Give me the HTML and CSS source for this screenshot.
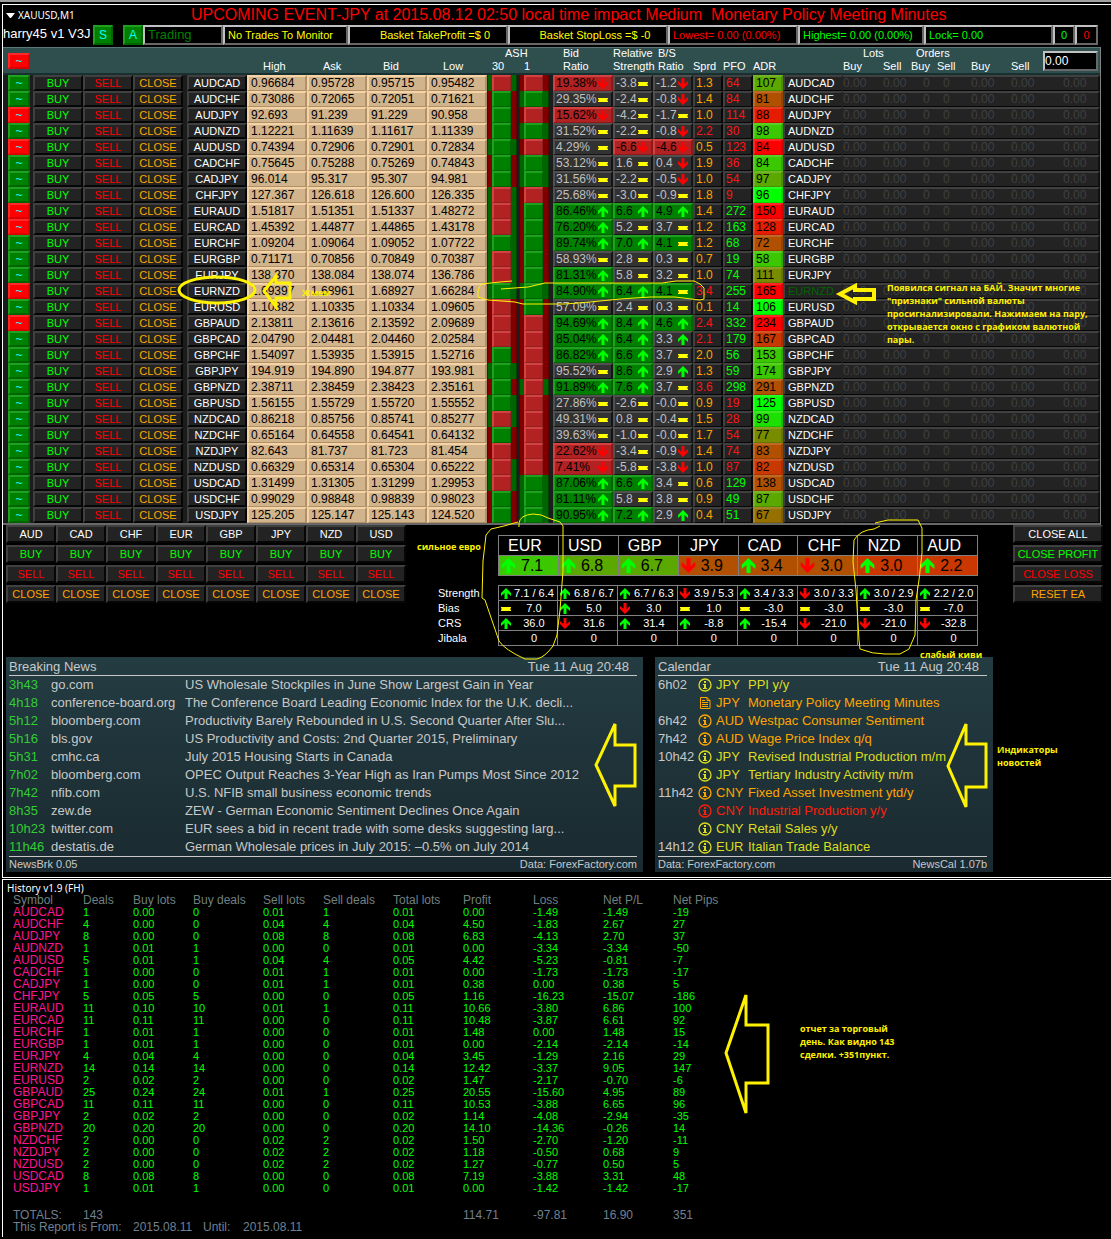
FILE: index.html
```html
<!DOCTYPE html>
<html lang="en">
<head>
<meta charset="utf-8">
<title>XAUUSD,M1</title>
<link rel="stylesheet" href="styles.css">
</head>
<body>
<svg width="0" height="0" class="defs" aria-hidden="true">
  <symbol id="up" viewBox="0 0 10 11"><path d="M5 0L10 5V8L6.500 5V11H3.500V5L0 8V5Z" fill="#00ff00"/></symbol>
  <symbol id="down" viewBox="0 0 10 11"><path d="M5 11L10 6V3L6.500 6V0H3.500V6L0 3V6Z" fill="#ff0000"/></symbol>
  <symbol id="flat" viewBox="0 0 10 11"><path d="M0 4H10V8H0Z" fill="#ffff00"/><path d="M0 5H1V7H0ZM9 5H10V7H9Z" fill="#a09000"/></symbol>
  <symbol id="info" viewBox="0 0 14 14"><circle cx="7" cy="7" r="6" fill="none" stroke="currentColor" stroke-width="1.300"/><path d="M6 3H8V5H6ZM5 6H8V10H9V11H5V10H6V7H5Z" fill="currentColor"/></symbol>
  <symbol id="doc" viewBox="0 0 14 14"><path d="M2.500 1.500H9L12 4.500V12.500H2.500ZM9 1.500V4.500H12M4 4.500H7M4 6.500H10M4 8.500H10M4 10.500H10" fill="none" stroke="currentColor"/></symbol>
</svg>
<div class="terminal">
  <section class="chart">
    <header class="title"><span class="caret"></span><h1>XAUUSD,M1</h1><p>UPCOMING EVENT-JPY at 2015.08.12 02:50 local time impact Medium&nbsp; Monetary Policy Meeting Minutes</p></header>
    <div class="status">
      <span class="ea">harry45 v1 V3J</span>
      <button class="mode">S</button><button class="mode">A</button>
      <span class="box dim">Trading</span>
      <span class="box yellow">No Trades To Monitor</span>
      <span class="box yellow mid basket">Basket TakeProfit =$ 0</span>
      <span class="box yellow mid basket">Basket StopLoss =$ -0</span>
      <span class="box red">Lowest= 0.00 (0.00%)</span>
      <span class="box lime">Highest= 0.00 (0.00%)</span>
      <span class="box lime">Lock= 0.00</span>
      <span class="box lime mid">0</span>
      <span class="box red mid">0</span>
    </div>
    <table class="pairs">
      <colgroup>
        <col class="w30"><col class="w50"><col class="w50"><col class="w50"><col class="w4"><col class="w60">
        <col class="w60"><col class="w60"><col class="w60"><col class="w60">
        <col class="w32"><col class="w34"><col class="w60"><col class="w40"><col class="w40">
        <col class="w30"><col class="w30"><col class="w30"><col class="w60"><col class="w40"><col class="w28">
        <col class="w26"><col class="w34"><col class="w40"><col class="w32"><col>
      </colgroup>
      <thead>
        <tr><th rowspan="2" class="act"><button class="sig r">~</button></th><th colspan="9"></th><th colspan="2" class="ash-h">ASH</th><th class="in2">Bid</th><th>Relative</th><th class="in1">B/S</th><th colspan="3"></th><th></th><th colspan="2" class="lots">Lots</th><th colspan="2" class="in1">Orders</th><th></th><th></th><th rowspan="2" class="act"><input class="lot" aria-label="Lot size" value="0.00"></th></tr>
        <tr><th></th><th></th><th></th><th></th><th></th><th class="in3">High</th><th class="in3">Ask</th><th class="in3">Bid</th><th class="in3">Low</th><th class="in1">30</th><th class="in1">1</th><th class="in2">Ratio</th><th>Strength</th><th class="in1">Ratio</th><th>Sprd</th><th>PFO</th><th>ADR</th><th></th><th>Buy</th><th>Sell</th><th>Buy</th><th>Sell</th><th>Buy</th><th>Sell</th></tr>
      </thead>
      <tbody id="pairs"></tbody>
    </table>
    <div class="middle">
      <div class="baskets" id="baskets"></div>
      <div class="strength">
        <table class="big"><tbody id="big"></tbody></table>
        <table class="small"><tbody id="small"></tbody></table>
      </div>
      <div class="global">
        <button class="btn white">CLOSE ALL</button><button class="btn lime">CLOSE PROFIT</button><button class="btn red">CLOSE LOSS</button><button class="btn orange">RESET EA</button>
      </div>
    </div>
    <div class="panels">
      <section class="panel news">
        <header><h2>Breaking News</h2><time>Tue 11 Aug 20:48</time></header>
        <ul id="news"></ul>
        <footer><span>NewsBrk 0.05</span><span>Data: ForexFactory.com</span></footer>
      </section>
      <section class="panel calendar">
        <header><h2>Calendar</h2><time>Tue 11 Aug 20:48</time></header>
        <ul id="calendar"></ul>
        <footer><span>Data: ForexFactory.com</span><span>NewsCal 1.07b</span></footer>
      </section>
    </div>
  </section>
  <section class="history">
    <h2>History v1.9 (FH)</h2>
    <table>
      <colgroup><col class="w70"><col class="w50"><col class="w60"><col class="w70"><col class="w60"><col class="w70"><col class="w70"><col class="w70"><col class="w70"><col class="w70"><col></colgroup>
      <thead><tr><th>Symbol</th><th>Deals</th><th>Buy lots</th><th>Buy deals</th><th>Sell lots</th><th>Sell deals</th><th>Total lots</th><th>Profit</th><th>Loss</th><th>Net P/L</th><th>Net Pips</th></tr></thead>
      <tbody id="history"></tbody>
      <tfoot><tr><td>TOTALS:</td><td colspan="6">143</td><td>114.71</td><td>-97.81</td><td>16.90</td><td>351</td></tr></tfoot>
    </table>
    <p class="report"><span>This Report is From:</span><span>2015.08.11</span><span>Until:</span><span>2015.08.11</span></p>
  </section>
  <svg class="marks" width="1111" height="1239" fill="none" stroke="#fff200" aria-hidden="true">
    <ellipse cx="217" cy="290" rx="38" ry="13" stroke-width="3"/>
    <path d="M264 291L276 276V283H290V298H276V307Z" stroke-width="3"/>
    <path d="M840 294L855 286V290H874V299H855V302Z" stroke-width="4"/>
    <path d="M596 765L615 724V745H635V786H615V806Z" stroke-width="3"/>
    <path d="M948 766L966 724V744H986V787H966V807Z" stroke-width="3"/>
    <path d="M726 1053L746 995V1025H768V1083H746V1113Z" stroke-width="3"/>
    <path d="M512 281L500 282L482 284Q477 288 478 297L488 300L515 302L523 304H565L590 302L620 299L650 297H675L700 300L704 299V288L700 284L694 281H676L662 283H545L528 287L501 289"/>
    <path d="M519 527V523Q520 515 533 514Q542 514 548 518L560 522L563 526V571L560 610L557 635L553 646Q545 657 537 659H525Q505 650 499 641L485 600L482 598L483 561L486 535L491 529L504 526L518 522"/>
    <path d="M880 526L874 529Q860 530 854 540L853 562L856 590L859 640L860 649Q872 654 885 654H900L909 649L915 635L916 600L919 580L922 553V528L918 520H888L875 523"/>
  </svg>
  <p class="note zhmem">Жмем</p>
  <p class="note signal">Появился сигнал на БАЙ. Значит многие<br>"признаки" сильной валюты<br>просигнализировали. Нажимаем на пару,<br>открывается окно с графиком валютной<br>пары.</p>
  <p class="note euro">сильное евро</p>
  <p class="note kiwi">слабый киви</p>
  <p class="note newsnote">Индикаторы<br>новостей</p>
  <p class="note day">отчет за торговый<br>день. Как видно 143<br>сделки. +351пункт.</p>
</div>
<script src="app.js"></script>
</body>
</html>
```
FILE: app.js
```js
// signal | pair | high ask bid low | ASH colours (30 outer/inner, 1 outer/inner) | bid ratio | strength | b/s | spread | PFO | ADR | ADR colour
// Readings carry a fill (n, g, r) and a trend (u, d, f).
const PAIRS = `
g AUDCAD 0.96684 0.95728 0.95715 0.95482 grrr 19.38%rd -3.8nf -1.2nd 1.3 -64 107 5aa800
g AUDCHF 0.73086 0.72065 0.72051 0.71621 rggg 29.35%nf -2.4nf -0.8nd 1.4 -84 81 b05000
r AUDJPY 92.693 91.239 91.229 90.958 rgrr 15.62%rd -4.2nf -1.7nf 1.0 -114 88 e61c00
g AUDNZD 1.12221 1.11639 1.11617 1.11339 rggg 31.52%nf -2.2nf -0.8nd 2.2 -30 98 3cc800
r AUDUSD 0.74394 0.72906 0.72901 0.72834 ggrr 4.29%nf -6.6rd -4.6rd 0.5 -123 84 ff0000
g CADCHF 0.75645 0.75288 0.75269 0.74843 rggg 53.12%nf 1.6nf 0.4nd 1.9 -36 84 3cc800
g CADJPY 96.014 95.317 95.307 94.981 rggg 31.56%nf -2.2nf -0.5nd 1.0 -54 97 5aa800
g CHFJPY 127.367 126.618 126.600 126.335 grrr 25.68%nf -3.0nf -0.9nf 1.8 -9 96 00ff00
r EURAUD 1.51817 1.51351 1.51337 1.48272 grrg 86.46%gu 6.6gu 4.9gu 1.4 272 150 ff0000
r EURCAD 1.45392 1.44877 1.44865 1.43178 grrg 76.20%gu 5.2nf 3.7nf 1.2 163 128 e61c00
g EURCHF 1.09204 1.09064 1.09052 1.07722 ggrg 89.74%gu 7.0gu 4.1gf 1.2 68 72 b05000
g EURGBP 0.71171 0.70856 0.70849 0.70387 grrg 58.93%nf 2.8nf 0.3nf 0.7 19 58 3cc800
g EURJPY 138.370 138.084 138.074 136.786 grrg 81.31%gu 5.8nf 3.2nf 1.0 74 111 788c00
r EURNZD 1.69397 1.68961 1.68927 1.66284 gggg 84.90%gu 6.4gu 4.1gf 3.4 255 165 ff0000
g EURUSD 1.10382 1.10335 1.10334 1.09605 rrrg 57.09%nf 2.4nf 0.3nf 0.1 14 106 00ff00
r GBPAUD 2.13811 2.13616 2.13592 2.09689 rrrr 94.69%gu 8.4gu 4.6gu 2.4 332 234 ff0000
g GBPCAD 2.04790 2.04481 2.04460 2.02584 rrrr 85.04%gu 6.4gu 3.3nu 2.1 179 167 c83800
g GBPCHF 1.54097 1.53935 1.53915 1.52716 rgrr 86.82%gu 6.6gu 3.7nf 2.0 56 153 3cc800
g GBPJPY 194.919 194.890 194.877 193.981 ggrr 95.52%nf 8.6gu 2.9nu 1.3 59 174 3cc800
g GBPNZD 2.38711 2.38459 2.38423 2.35161 rggr 91.89%gu 7.6gu 3.7nf 3.6 298 291 b05000
g GBPUSD 1.56155 1.55729 1.55720 1.55552 ggrr 27.86%nf -2.6nf -0.0nf 0.9 -19 125 00ff00
g NZDCAD 0.86218 0.85756 0.85741 0.85277 grrr 49.31%nf 0.8nf -0.4nf 1.5 -28 99 1ee000
g NZDCHF 0.65164 0.64558 0.64541 0.64132 rgrr 39.63%nf -1.0nf -0.0nf 1.7 -54 77 788c00
g NZDJPY 82.643 81.737 81.723 81.454 rrrr 22.62%rd -3.4nf -0.9nd 1.4 -74 83 b05000
g NZDUSD 0.66329 0.65314 0.65304 0.65222 grrr 7.41%rd -5.8nf -3.8nd 1.0 -87 82 c83800
g USDCAD 1.31499 1.31305 1.31299 1.29953 grgg 87.06%gu 6.6gu 3.4nf 0.6 129 138 b05000
g USDCHF 0.99029 0.98848 0.98839 0.98023 rggg 81.11%gu 5.8nf 3.8nf 0.9 49 87 5aa800
g USDJPY 125.205 125.147 125.143 124.520 rggg 90.95%gu 7.2gu 2.9nu 0.4 51 67 967000`.trim().split('\n').map(l => l.split(' '));

const ICON = { u: 'up', d: 'down', f: 'flat' };
const icon = (k, cls = 'ic') => `<svg class="${cls}"><use href="#${ICON[k] || k}"/></svg>`;
const reading = v => {
  const [fill, trend] = v.slice(-2);
  return `<td class="fill-${fill}"><div class="reading">${v.slice(0, -2)}${icon(trend)}</div></td>`;
};
const put = (id, html) => { document.getElementById(id).innerHTML = html; };

put('pairs', PAIRS.map(([sig, pair, hi, ask, bid, low, ash, ratio, rs, bs, sprd, pfo, adr, color]) => `<tr>
<td class="act"><button class="sig ${sig}">~</button></td>
<td class="act"><button class="btn lime">BUY</button></td><td class="act"><button class="btn red">SELL</button></td><td class="act"><button class="btn orange">CLOSE</button></td>
<td class="act"></td><td class="act"><button class="btn white">${pair}</button></td>
${[hi, ask, bid, low].map(p => `<td class="price">${p}</td>`).join('')}
<td class="act"><div class="ash o-${ash[0]}"><i class="i-${ash[1]}"></i></div></td><td class="act"><div class="ash o-${ash[2]}"><i class="i-${ash[3]}"></i></div></td>
${reading(ratio)}${reading(rs)}${reading(bs)}
<td class="dark ${sprd > 2 ? 'alert' : 'orange'}">${sprd}</td><td class="dark ${pfo < 0 ? 'alert' : 'gain'}">${Math.abs(pfo)}</td>
<td class="adr" style="background-color:#${color}">${adr}</td>
<td class="name ${pair === 'EURNZD' ? 'picked' : ''}">${pair}</td><td class="zero">0.00</td><td class="zero">0.00</td><td class="zero z12">0</td><td class="zero z6">0</td><td class="zero">0.00</td><td class="zero">0.00</td><td class="zero last">0.00</td></tr>`).join(''));

const CCY = ['AUD', 'CAD', 'CHF', 'EUR', 'GBP', 'JPY', 'NZD', 'USD'];
put('baskets', [CCY.map(c => [c, 'white']), ...[['BUY', 'lime'], ['SELL', 'red'], ['CLOSE', 'orange']].map(b => CCY.map(() => b))]
  .flat().map(([t, c]) => `<button class="btn ${c}">${t}</button>`).join(''));

const METER = `
EUR u7.1 3cc800 u7.1_/_6.4 f7.0 u36.0
USD u6.8 5aa800 u6.8_/_6.7 u5.0 d31.6
GBP u6.7 5aa800 u6.7_/_6.3 d3.0 u31.4
JPY d3.9 b05000 d3.9_/_5.3 f1.0 u-8.8
CAD u3.4 b05000 u3.4_/_3.3 f-3.0 u-15.4
CHF d3.0 b05000 d3.0_/_3.3 f-3.0 d-21.0
NZD u3.0 c83800 u3.0_/_2.9 f-3.0 d-21.0
AUD u2.2 c83800 u2.2_/_2.0 f-7.0 d-32.8`.trim().split('\n').map(l => l.split(' '));
put('big', `<tr>${METER.map(m => `<th>${m[0]}</th>`).join('')}</tr><tr>${METER.map(m =>
  `<td style="background-color:#${m[2]}"><div>${icon(m[1][0], 'big-ic')}<span>${m[1].slice(1)}</span></div></td>`).join('')}</tr>`);
put('small', ['Strength', 'Bias', 'CRS'].map((n, i) => `<tr><th>${n}</th>${METER.map(m => {
  const v = m[i + 3];
  return `<td><div>${icon(v[0])}<span>${v.slice(1).replace(/_/g, ' ')}</span></div></td>`;
}).join('')}</tr>`).join('') + `<tr><th>Jibala</th>${METER.map(() => '<td><div><i></i><span>0</span></div></td>').join('')}</tr>`);

put('news', `
3h43|go.com|US Wholesale Stockpiles in June Show Largest Gain in Year
4h18|conference-board.org|The Conference Board Leading Economic Index for the U.K. decli...
5h12|bloomberg.com|Productivity Barely Rebounded in U.S. Second Quarter After Slu...
5h16|bls.gov|US Productivity and Costs: 2nd Quarter 2015, Preliminary
5h31|cmhc.ca|July 2015 Housing Starts in Canada
7h02|bloomberg.com|OPEC Output Reaches 3-Year High as Iran Pumps Most Since 2012
7h42|nfib.com|U.S. NFIB small business economic trends
8h35|zew.de|ZEW - German Economic Sentiment Declines Once Again
10h23|twitter.com|EUR sees a bid in recent trade with some desks suggesting larg...
11h46|destatis.de|German Wholesale prices in July 2015: –0.5% on July 2014`.trim().split('\n').map(l => {
  const [t, s, h] = l.split('|');
  return `<li><span class="age">${t}</span><a href="#">${s}</a><span>${h}</span></li>`;
}).join(''));

put('calendar', `
6h02|info|low|JPY|PPI y/y
|doc|med|JPY|Monetary Policy Meeting Minutes
6h42|info|med|AUD|Westpac Consumer Sentiment
7h42|info|med|AUD|Wage Price Index q/q
10h42|info|low|JPY|Revised Industrial Production m/m
|info|low|JPY|Tertiary Industry Activity m/m
11h42|info|med|CNY|Fixed Asset Investment ytd/y
|info|high|CNY|Industrial Production y/y
|info|low|CNY|Retail Sales y/y
14h12|info|low|EUR|Italian Trade Balance`.trim().split('\n').map(l => {
  const [t, k, lvl, c, e] = l.split('|');
  return `<li class="${lvl}"><span class="when">${t}</span>${icon(k, 'cal-ic')}<span>${c}</span><span>${e}</span></li>`;
}).join(''));

put('history', `
AUDCAD 1 0.00 0 0.01 1 0.01 0.00 -1.49 -1.49 -19
AUDCHF 4 0.00 0 0.04 4 0.04 4.50 -1.83 2.67 27
AUDJPY 8 0.00 0 0.08 8 0.08 6.83 -4.13 2.70 37
AUDNZD 1 0.01 1 0.00 0 0.01 0.00 -3.34 -3.34 -50
AUDUSD 5 0.01 1 0.04 4 0.05 4.42 -5.23 -0.81 -7
CADCHF 1 0.00 0 0.01 1 0.01 0.00 -1.73 -1.73 -17
CADJPY 1 0.00 0 0.01 1 0.01 0.38 0.00 0.38 5
CHFJPY 5 0.05 5 0.00 0 0.05 1.16 -16.23 -15.07 -186
EURAUD 11 0.10 10 0.01 1 0.11 10.66 -3.80 6.86 100
EURCAD 11 0.11 11 0.00 0 0.11 10.48 -3.87 6.61 92
EURCHF 1 0.01 1 0.00 0 0.01 1.48 0.00 1.48 15
EURGBP 1 0.01 1 0.00 0 0.01 0.00 -2.14 -2.14 -14
EURJPY 4 0.04 4 0.00 0 0.04 3.45 -1.29 2.16 29
EURNZD 14 0.14 14 0.00 0 0.14 12.42 -3.37 9.05 147
EURUSD 2 0.02 2 0.00 0 0.02 1.47 -2.17 -0.70 -6
GBPAUD 25 0.24 24 0.01 1 0.25 20.55 -15.60 4.95 89
GBPCAD 11 0.11 11 0.00 0 0.11 10.53 -3.88 6.65 96
GBPJPY 2 0.02 2 0.00 0 0.02 1.14 -4.08 -2.94 -35
GBPNZD 20 0.20 20 0.00 0 0.20 14.10 -14.36 -0.26 14
NZDCHF 2 0.00 0 0.02 2 0.02 1.50 -2.70 -1.20 -11
NZDJPY 2 0.00 0 0.02 2 0.02 1.18 -0.50 0.68 9
NZDUSD 2 0.00 0 0.02 2 0.02 1.27 -0.77 0.50 5
USDCAD 8 0.08 8 0.00 0 0.08 7.19 -3.88 3.31 48
USDJPY 1 0.01 1 0.00 0 0.01 0.00 -1.42 -1.42 -17`.trim().split('\n').map(l =>
  `<tr>${l.split(' ').map(v => `<td>${v}</td>`).join('')}</tr>`).join(''));
```
FILE: styles.css
```css
* { box-sizing: border-box; margin: 0; padding: 0; }
body { background: #000; color: #fff; font: 11px/13px "Liberation Sans", Arial, sans-serif; white-space: nowrap; }
button, input { font: inherit; color: inherit; border-radius: 0; display: block; }
h1, h2 { font-weight: normal; font-size: 11px; }
ul { list-style: none; }
.defs { position: absolute; }
.terminal { position: relative; min-width: 1111px; border-top: 2px solid #a0a0a0; padding: 2px 0 0 2px; overflow: hidden; }
.chart { border: solid #fff; border-width: 1px 0 1px 1px; padding-bottom: 5px; }

.white { color: #fff; }
.lime { color: #00ff00; }
.red { color: #ff0000; }
.orange { color: #ffa500; }
.yellow { color: #ffff00; }
.dim { color: #008000; }

.title { display: flex; align-items: center; height: 20px; padding-left: 3px; }
.title h1 { width: 176px; padding-left: 3px; font: 10px/14px "Noto Sans", sans-serif; }
.title p { font-size: 16px; line-height: 20px; color: #ff0000; }
.caret { width: 9px; border: solid transparent; border-width: 5px 4px 0; border-top-color: #fff; }

.status { display: grid; grid-template-columns: 90px 30px 20px 80px 125px 160px 160px 130px 126px 129px 22px 23px; height: 22px; align-items: stretch; }
.ea { font-size: 13px; line-height: 18px; }
.mode { width: 20px; height: 20px; background: #008000; border: 2px solid; border-color: #20a020 #006400 #006400 #20a020; color: #00ffff; font-size: 12px; line-height: 16px; }
.box { height: 20px; border: 2px solid; border-color: #c0c0c0 #686868 #686868 #c0c0c0; padding-left: 3px; line-height: 16px; overflow: hidden; }
.box.dim { font-size: 13px; }
.box.mid { text-align: center; padding: 0; }
.box.basket { padding-left: 14px; }

table { border-collapse: separate; border-spacing: 0; table-layout: fixed; }
.w4 { width: 4px; } .w26 { width: 26px; } .w28 { width: 28px; } .w30 { width: 30px; } .w32 { width: 32px; } .w34 { width: 34px; } .w40 { width: 40px; } .w50 { width: 50px; } .w60 { width: 60px; } .w70 { width: 70px; }

.pairs { width: calc(100% - 10px); background: #1c1c1c; border-bottom: 2px solid #686868; border-right: 1px solid #808080; }
.pairs th { background: #2f4f4f; font-weight: normal; text-align: left; height: 11px; line-height: 10px; border-top: 1px solid #587878; }
.pairs tr + tr th { height: 17px; line-height: 12px; border-top: 0; border-bottom: 2px solid #183030; }
.pairs th[rowspan] { border-bottom: 2px solid #183030; }
.pairs .in1 { padding-left: 5px; }
.pairs .in2 { padding-left: 10px; }
.pairs .in3 { padding-left: 16px; }
.pairs .ash-h { padding-left: 18px; }
.pairs .lots { padding-left: 20px; }
.pairs td { height: 16px; line-height: 13px; font-size: 12px; border: solid; border-width: 2px 2px 1px 2px; padding-left: 1px; }
.pairs td.act { border: 0; padding: 0; }
.pairs button { width: 100%; height: 16px; padding: 0; font-size: 11px; }
.btn { height: 18px; background: #232323; border: 2px solid; border-color: #404040 #060606 #060606 #404040; text-align: center; line-height: 13px; }
.pairs .sig { width: 22px; margin-left: 5px; color: #00ffff; border: 2px solid; line-height: 12px; font-size: 12px; }
.sig.g { background: #008000; border-color: #20a020 #006400 #006400 #20a020 !important; }
.sig.r { background: #ff0000; border-color: #ff2828 #d80000 #d80000 #ff2828 !important; }
.pairs td.price { background: #d2b48c; border-color: #f5d3a4 #b09068 #b09068 #f5d3a4; color: #000; padding-left: 2px; }
.ash { height: 16px; width: 30px; padding: 0 5px 0 4px; border: solid; border-width: 0 1px; }
.ash i { display: block; height: 16px; border: solid; border-width: 2px 1px 1px 2px; }
.o-g { background: #006400; border-color: #209020 #004000; }
.o-r { background: #800000; border-color: #a01818 #600000; }
.ash .i-g { background: #008000; border-color: #20a020 #006400 #006400 #20a020; }
.ash .i-r { background: #b22222; border-color: #d24242 #902020 #902020 #d24242; }
.reading { display: flex; justify-content: space-between; align-items: center; height: 13px; padding-right: 3px; }
.ic { width: 10px; height: 11px; flex: none; }
.pairs .fill-n { background: #323232; border-color: #505050 #141414 #141414 #505050; color: #c0c0c0; }
.pairs .fill-g { background: #008000; border-color: #20a020 #006400 #006400 #20a020; color: #000; }
.pairs .fill-r { background: #b22222; border-color: #d24242 #901818 #901818 #d24242; color: #000; }
.pairs td.dark { background: #232323; border-color: #404040 #060606 #060606 #404040; }
.dark.alert { color: #ff1414; } .dark.gain { color: #00ff00; }
.pairs td.adr { border-color: rgba(255,255,255,.15) rgba(0,0,0,.15) rgba(0,0,0,.15) rgba(255,255,255,.15); color: #000; }
.pairs td.name, .pairs td.zero { background: #232323; border-color: #404040 transparent #060606 #404040; }
.pairs td.name { font-size: 11px; padding-left: 3px; }
.pairs td.picked { color: #006400; }
.pairs td.zero { border-width: 2px 0 1px; color: #404040; padding: 0; }
.pairs td.z12 { padding-left: 12px; } .pairs td.z6 { padding-left: 6px; }
.pairs td.last { padding-left: 20px; border-right: 2px solid #101010; }
.lot { width: calc(100% - 2px); height: 20px; background: #000; border: 2px solid; border-color: #c0c0c0 #686868 #686868 #c0c0c0; font-size: 12px; }

.middle { display: flex; height: 132px; padding: 0 8px 0 3px; }
.baskets { display: grid; grid-template-columns: repeat(8, 50px); grid-auto-rows: 18px; row-gap: 2px; width: 432px; }
.strength { padding-top: 10px; flex: 1; }
.strength table { width: 540px; }
.big, .small { border-collapse: collapse; }
.strength table.big { width: 480px; margin-left: 60px; }
.big th, .big td { border: 1px solid #808080; height: 20px; font-size: 16px; line-height: 18px; font-weight: normal; padding: 0; }
.big th { padding-right: 7px; }
.big td { color: #000; }
.big td div { display: flex; align-items: center; padding-left: 2px; gap: 5px; height: 18px; }
.big-ic { width: 15px; height: 15px; }
.small { margin-top: 9px; }
.small td, .small th { height: 15px; line-height: 13px; padding: 0; font-weight: normal; text-align: left; border: 1px solid #808080; }
.small th { width: 60px; border: 0; }
.small td div { display: grid; grid-template-columns: 12px 1fr; align-items: center; text-align: center; padding: 0 2px; height: 13px; }
.global { display: grid; grid-template-columns: 90px; grid-auto-rows: 18px; row-gap: 2px; }

.panels { display: flex; gap: 12px; padding-left: 3px; color: #c8c8c8; font-size: 13px; }
.panel { height: 215px; padding: 2px 6px 0 3px; background: linear-gradient(#233c42, #1a2a30); }
.news { width: 637px; }
.calendar { width: 338px; }
.panel header { display: flex; justify-content: space-between; height: 17px; line-height: 16px; padding-right: 8px; border-bottom: 1px solid #c8c8c8; }
.panel h2 { font-size: 13px; }
.panel li { display: grid; height: 18px; line-height: 18px; }
.news li { grid-template-columns: 42px 134px 1fr; }
.calendar li { grid-template-columns: 40px 18px 32px 1fr; align-items: center; }
.panel a { color: inherit; text-decoration: none; }
.age { color: #32cd32; }
.when { color: #c8c8c8; }
.low { color: #dcdc1e; } .med { color: #ffa500; } .high { color: #ff1e0a; }
.cal-ic { width: 14px; height: 14px; }
.panel footer { display: flex; justify-content: space-between; font-size: 11px; line-height: 14px; border-top: 1px solid #c8c8c8; }

.history { margin-top: 1px; border: solid #fff; border-width: 1px 0 0 1px; padding: 2px 4px 4px; }
.history h2 { font: 10px/12px "Noto Sans", sans-serif; }
.history table { width: 100%; margin-left: 6px; }
.history th, .history tfoot td { font-weight: normal; text-align: left; color: #708080; font-size: 12px; line-height: 12px; }
.history tbody td { color: #00ff00; line-height: 12px; height: 12px; }
.history tbody td:first-child { color: #ff1493; font-size: 12px; }
.history tfoot td { padding-top: 15px; color: #708090; }
.report { display: grid; grid-template-columns: 120px 70px 40px 1fr; padding-left: 6px; color: #708090; font-size: 12px; line-height: 12px; }

.marks { position: absolute; left: 0; top: -2px; pointer-events: none; }
.note { position: absolute; color: #fff200; font: bold 9px/13px "Open Sans", "Noto Sans", sans-serif; }
.zhmem { left: 302px; top: 284px; }
.signal { left: 887px; top: 279px; }
.euro { left: 417px; top: 538px; }
.kiwi { left: 920px; top: 646px; }
.newsnote { left: 997px; top: 741px; }
.day { left: 800px; top: 1020px; }
```
